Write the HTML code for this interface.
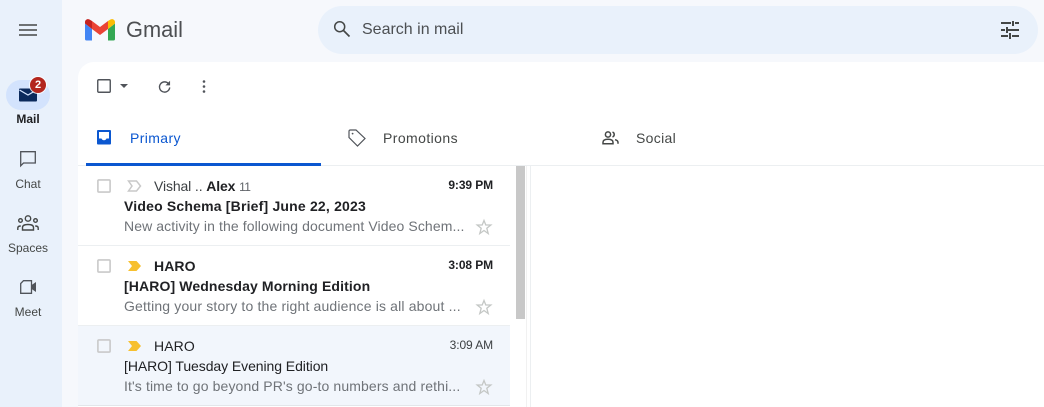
<!DOCTYPE html>
<html style="width:1044px;height:407px;overflow:hidden"><head><meta charset="utf-8"><style>
html,body{margin:0;padding:0}
body{width:1044px;height:407px;overflow:hidden;position:relative;background:#f6f8fc;font-family:"Liberation Sans",sans-serif;color:#202124}
.a{position:absolute;white-space:nowrap}
svg{position:absolute;overflow:visible}
.n{font-size:12px;color:#444746;text-align:center;width:62px;left:-3px}
.s{font-size:14px;left:154px}
.t{font-size:14px;left:124px}
.p{font-size:14px;left:124px;color:#6f7378}
.d{font-size:12px;right:551px;letter-spacing:-.1px}
b{font-weight:bold}
</style></head><body>
<div class="a" style="left:0;top:0;width:62px;height:407px;background:#e9f1fb"></div>
<div class="a" style="left:78px;top:62px;width:966px;height:345px;background:#fff;border-radius:16px 0 0 0"></div>

<svg style="left:0;top:0" width="62" height="60"><path d="M19 25h18M19 30h18M19 35h18" stroke="#444746" stroke-width="1.600" fill="none"/></svg>
<svg style="left:85px;top:19px" width="30" height="22" viewBox="0 0 30 22">
<path d="M0 4.500V20q0 1.500 1.500 1.500H7V10z" fill="#4285f4"/>
<path d="M23 21.500h5.500q1.500 0 1.500-1.500V4.500L23 10z" fill="#34a853"/>
<path d="M7 10V2L15 8l8-6v8l-8 6z" fill="#ea4335"/>
<path d="M0 4.500 7 10V2L4.500.5C2.500-.7 0 .8 0 3z" fill="#c5221f"/>
<path d="M30 4.500 23 10V2l2.500-1.500C27.500-.7 30 .8 30 3z" fill="#fbbc04"/>
</svg>
<div class="a" style="left:126px;top:15px;font-size:21.800px;color:#4d4f52;line-height:30px">Gmail</div>

<div class="a" style="left:318px;top:6px;width:720px;height:48px;border-radius:24px;background:#e9f1fb"></div>
<svg style="left:333px;top:20px" width="18" height="18" viewBox="0 0 18 18"><circle cx="6.700" cy="6.700" r="5" fill="none" stroke="#444746" stroke-width="1.500"/><path d="M10.500 10.500 16.500 16.500" stroke="#444746" stroke-width="1.700" fill="none"/></svg>
<div class="a" style="left:362px;top:20px;font-size:16px;line-height:19px;color:#4c4f52">Search in mail</div>
<svg style="left:1001px;top:21px" width="18" height="18" viewBox="0 0 18 18" fill="#444746"><path d="M0 1h10v2H0zM14 1h4v2h-4zM11 0h2v5h-2zM0 8h4v2H0zM7 8h11v2H7zM5 6h2v6H5zM0 14h7v2H0zM11 14h7v2h-7zM8 12h2v6H8z"/></svg>

<svg style="left:6px;top:80px" width="50" height="32"><rect x="0" y="0" width="44" height="30" rx="15" fill="#d3e3fd"/><path d="M14 8.500h16q1 0 1 1v11q0 1-1 1H14q-1 0-1-1v-11q0-1 1-1z" fill="#0b2a5c"/><path d="M13.500 10 22 15l8.500-5" fill="none" stroke="#d3e3fd" stroke-width="1.300"/></svg>
<svg style="left:28px;top:75px" width="20" height="20"><circle cx="10" cy="10" r="9" fill="#fff" opacity=".8"/><circle cx="10" cy="10" r="8" fill="#b3261e"/></svg>
<div class="a" style="left:28px;top:77px;width:20px;text-align:center;font-size:11px;font-weight:bold;line-height:16px;color:#fff">2</div>
<div class="a n" style="top:112px;font-weight:bold;color:#202124;line-height:15px">Mail</div>
<svg style="left:20px;top:151px" width="16" height="16" viewBox="0 0 16 16"><path d="M.7.700h14.600v11.300H3.500l-2.800 2.800z" fill="none" stroke="#50545a" stroke-width="1.300"/></svg>
<div class="a n" style="top:177px;line-height:15px">Chat</div>
<svg style="left:17px;top:215px" width="22" height="17" viewBox="0 0 22 17" fill="none" stroke="#444746" stroke-width="1.400"><circle cx="11" cy="3.500" r="2.700"/><circle cx="3.500" cy="5.500" r="1.800"/><circle cx="18.500" cy="5.500" r="1.800"/><path d="M5.500 15v-2.500q0-3 5.500-3t5.500 3V15zM.8 15v-2q0-2 3-2M21.200 15v-2q0-2-3-2"/></svg>
<div class="a n" style="top:241px;line-height:15px">Spaces</div>
<svg style="left:20px;top:280px" width="17" height="14" viewBox="0 0 17 14" fill="none" stroke="#50545a" stroke-width="1.300"><path d="M3.500.7H11.500V13.300H.7V3.500z"/><path d="M12 4.800 16 2V12L12 9.200z" fill="#50545a" stroke="none"/></svg>
<div class="a n" style="top:305px;line-height:15px">Meet</div>

<svg style="left:97px;top:79px" width="14" height="14"><rect x=".75" y=".75" width="12.500" height="12.500" rx="1" fill="none" stroke="#50545a" stroke-width="1.400"/></svg>
<svg style="left:120px;top:84px" width="8" height="4"><path d="M0 0h8L4 4z" fill="#50545a"/></svg>
<svg style="left:158px;top:80px" width="13" height="13" viewBox="0 0 14 14" fill="none"><path d="M11.500 4.200A5.500 5.500 0 1 0 12.600 8" stroke="#50545a" stroke-width="1.500"/><path d="M13 .8v5H8z" fill="#50545a"/></svg>
<svg style="left:202px;top:80px" width="4" height="13"><circle cx="2" cy="1.500" r="1.300" fill="#50545a"/><circle cx="2" cy="6.500" r="1.300" fill="#50545a"/><circle cx="2" cy="11.500" r="1.300" fill="#50545a"/></svg>

<svg style="left:97px;top:130px" width="14" height="15" viewBox="0 0 14 15"><path d="M1 0h12q1 0 1 1v12.500q0 1-1 1H1q-1 0-1-1V1q0-1 1-1z" fill="#0b57d0"/><path d="M2 2h10v6.500H9.500q-.8 1.800-2.500 1.800T4.500 8.500H2z" fill="#fff"/></svg>
<div class="a" style="left:130px;top:130px;font-size:14px;line-height:17px;color:#0b57d0;letter-spacing:.38px">Primary</div>
<div class="a" style="left:78px;top:165px;width:966px;height:1px;background:#eceff1"></div>
<div class="a" style="left:86px;top:163px;width:235px;height:3px;background:#0b57d0"></div>

<svg style="left:348px;top:129px" width="18" height="18" viewBox="0 0 18 18" fill="none" stroke="#50545a" stroke-width="1.200"><path d="M1 2.500q0-1.500 1.500-1.500H8l9 8.500-7.500 7.500L1 8.500z"/><circle cx="4.600" cy="4.600" r=".9" fill="#50545a" stroke="none"/></svg>
<div class="a" style="left:383px;top:130px;font-size:14px;line-height:17px;color:#444746;letter-spacing:.42px">Promotions</div>
<svg style="left:602px;top:131px" width="17" height="14" viewBox="0 0 17 14" fill="none" stroke="#444746" stroke-width="1.500"><circle cx="6" cy="3.500" r="2.600"/><path d="M1 12.800v-1.500q0-3 5-3t5 3v1.500zM10.500 1.100a2.600 2.600 0 0 1 0 4.900M13 8.700q3 .7 3 2.800v1.300"/></svg>
<div class="a" style="left:636px;top:130px;font-size:14px;line-height:17px;color:#444746;letter-spacing:.32px">Social</div>

<div class="a" style="left:78px;top:245px;width:432px;height:1px;background:#eceff1"></div>
<div class="a" style="left:78px;top:326px;width:432px;height:79px;background:#f2f6fc"></div>
<div class="a" style="left:78px;top:325px;width:432px;height:1px;background:#eceff1"></div>
<div class="a" style="left:78px;top:405px;width:432px;height:1px;background:#e3e6ea"></div>
<div class="a" style="left:516px;top:166px;width:9px;height:153px;background:#c8c8c8"></div>
<div class="a" style="left:526px;top:166px;width:1px;height:241px;background:#f1f1f1"></div>
<div class="a" style="left:530px;top:166px;width:1px;height:241px;background:#eceff1"></div>

<svg style="left:97px;top:179px" width="14" height="14"><rect x=".9" y=".9" width="12.200" height="12.200" rx="1" fill="none" stroke="#c9c9c9" stroke-width="1.600"/></svg>
<svg style="left:127px;top:180px" width="15" height="12" viewBox="0 0 15 12"><path d="M1.500 1h8l4 5-4 5h-8l3.500-5z" fill="none" stroke="#c9c9c9" stroke-width="1.500"/></svg>
<div class="a s" style="top:178px;line-height:17px;color:#3c4043;letter-spacing:-.12px">Vishal .. <b style="color:#202124">Alex</b> <span style="font-size:12px;color:#5f6368;letter-spacing:-.7px">11</span></div>
<div class="a d" style="top:178px;line-height:15px;font-weight:bold">9:39 PM</div>
<div class="a t" style="top:198px;line-height:17px;font-weight:bold;letter-spacing:.19px">Video Schema [Brief] June 22, 2023</div>
<div class="a p" style="top:218px;line-height:17px;letter-spacing:.1px">New activity in the following document Video Schem...</div>
<svg style="left:476px;top:219px" width="16" height="16" viewBox="0 0 16 16"><path d="M8 1.500 9.800 6H14.800L10.800 9.200 12.200 14.500 8 11.500 3.800 14.500 5.200 9.200 1.200 6H6.200z" fill="none" stroke="#c4c7c5" stroke-width="1.300"/></svg>

<svg style="left:97px;top:259px" width="14" height="14"><rect x=".9" y=".9" width="12.200" height="12.200" rx="1" fill="none" stroke="#c9c9c9" stroke-width="1.600"/></svg>
<svg style="left:127px;top:260px" width="15" height="12" viewBox="0 0 15 12"><path d="M1 1h8.500L14 6 9.500 11H1l4-5z" fill="#f7c02f"/></svg>
<div class="a s" style="top:258px;line-height:17px;font-weight:bold;letter-spacing:.1px">HARO</div>
<div class="a d" style="top:258px;line-height:15px;font-weight:bold">3:08 PM</div>
<div class="a t" style="top:278px;line-height:17px;font-weight:bold;letter-spacing:.12px">[HARO] Wednesday Morning Edition</div>
<div class="a p" style="top:298px;line-height:17px;letter-spacing:.16px">Getting your story to the right audience is all about ...</div>
<svg style="left:476px;top:299px" width="16" height="16" viewBox="0 0 16 16"><path d="M8 1.500 9.800 6H14.800L10.800 9.200 12.200 14.500 8 11.500 3.800 14.500 5.200 9.200 1.200 6H6.200z" fill="none" stroke="#c4c7c5" stroke-width="1.300"/></svg>

<svg style="left:97px;top:339px" width="14" height="14"><rect x=".9" y=".9" width="12.200" height="12.200" rx="1" fill="none" stroke="#c9c9c9" stroke-width="1.600"/></svg>
<svg style="left:127px;top:340px" width="15" height="12" viewBox="0 0 15 12"><path d="M1 1h8.500L14 6 9.500 11H1l4-5z" fill="#f7c02f"/></svg>
<div class="a s" style="top:338px;line-height:17px;letter-spacing:.1px">HARO</div>
<div class="a d" style="top:338px;line-height:15px;color:#3c4043">3:09 AM</div>
<div class="a t" style="top:358px;line-height:17px;letter-spacing:-.07px">[HARO] Tuesday Evening Edition</div>
<div class="a p" style="top:378px;line-height:17px;letter-spacing:.12px">It's time to go beyond PR's go-to numbers and rethi...</div>
<svg style="left:476px;top:379px" width="16" height="16" viewBox="0 0 16 16"><path d="M8 1.500 9.800 6H14.800L10.800 9.200 12.200 14.500 8 11.500 3.800 14.500 5.200 9.200 1.200 6H6.200z" fill="none" stroke="#c4c7c5" stroke-width="1.300"/></svg>
</body></html>
